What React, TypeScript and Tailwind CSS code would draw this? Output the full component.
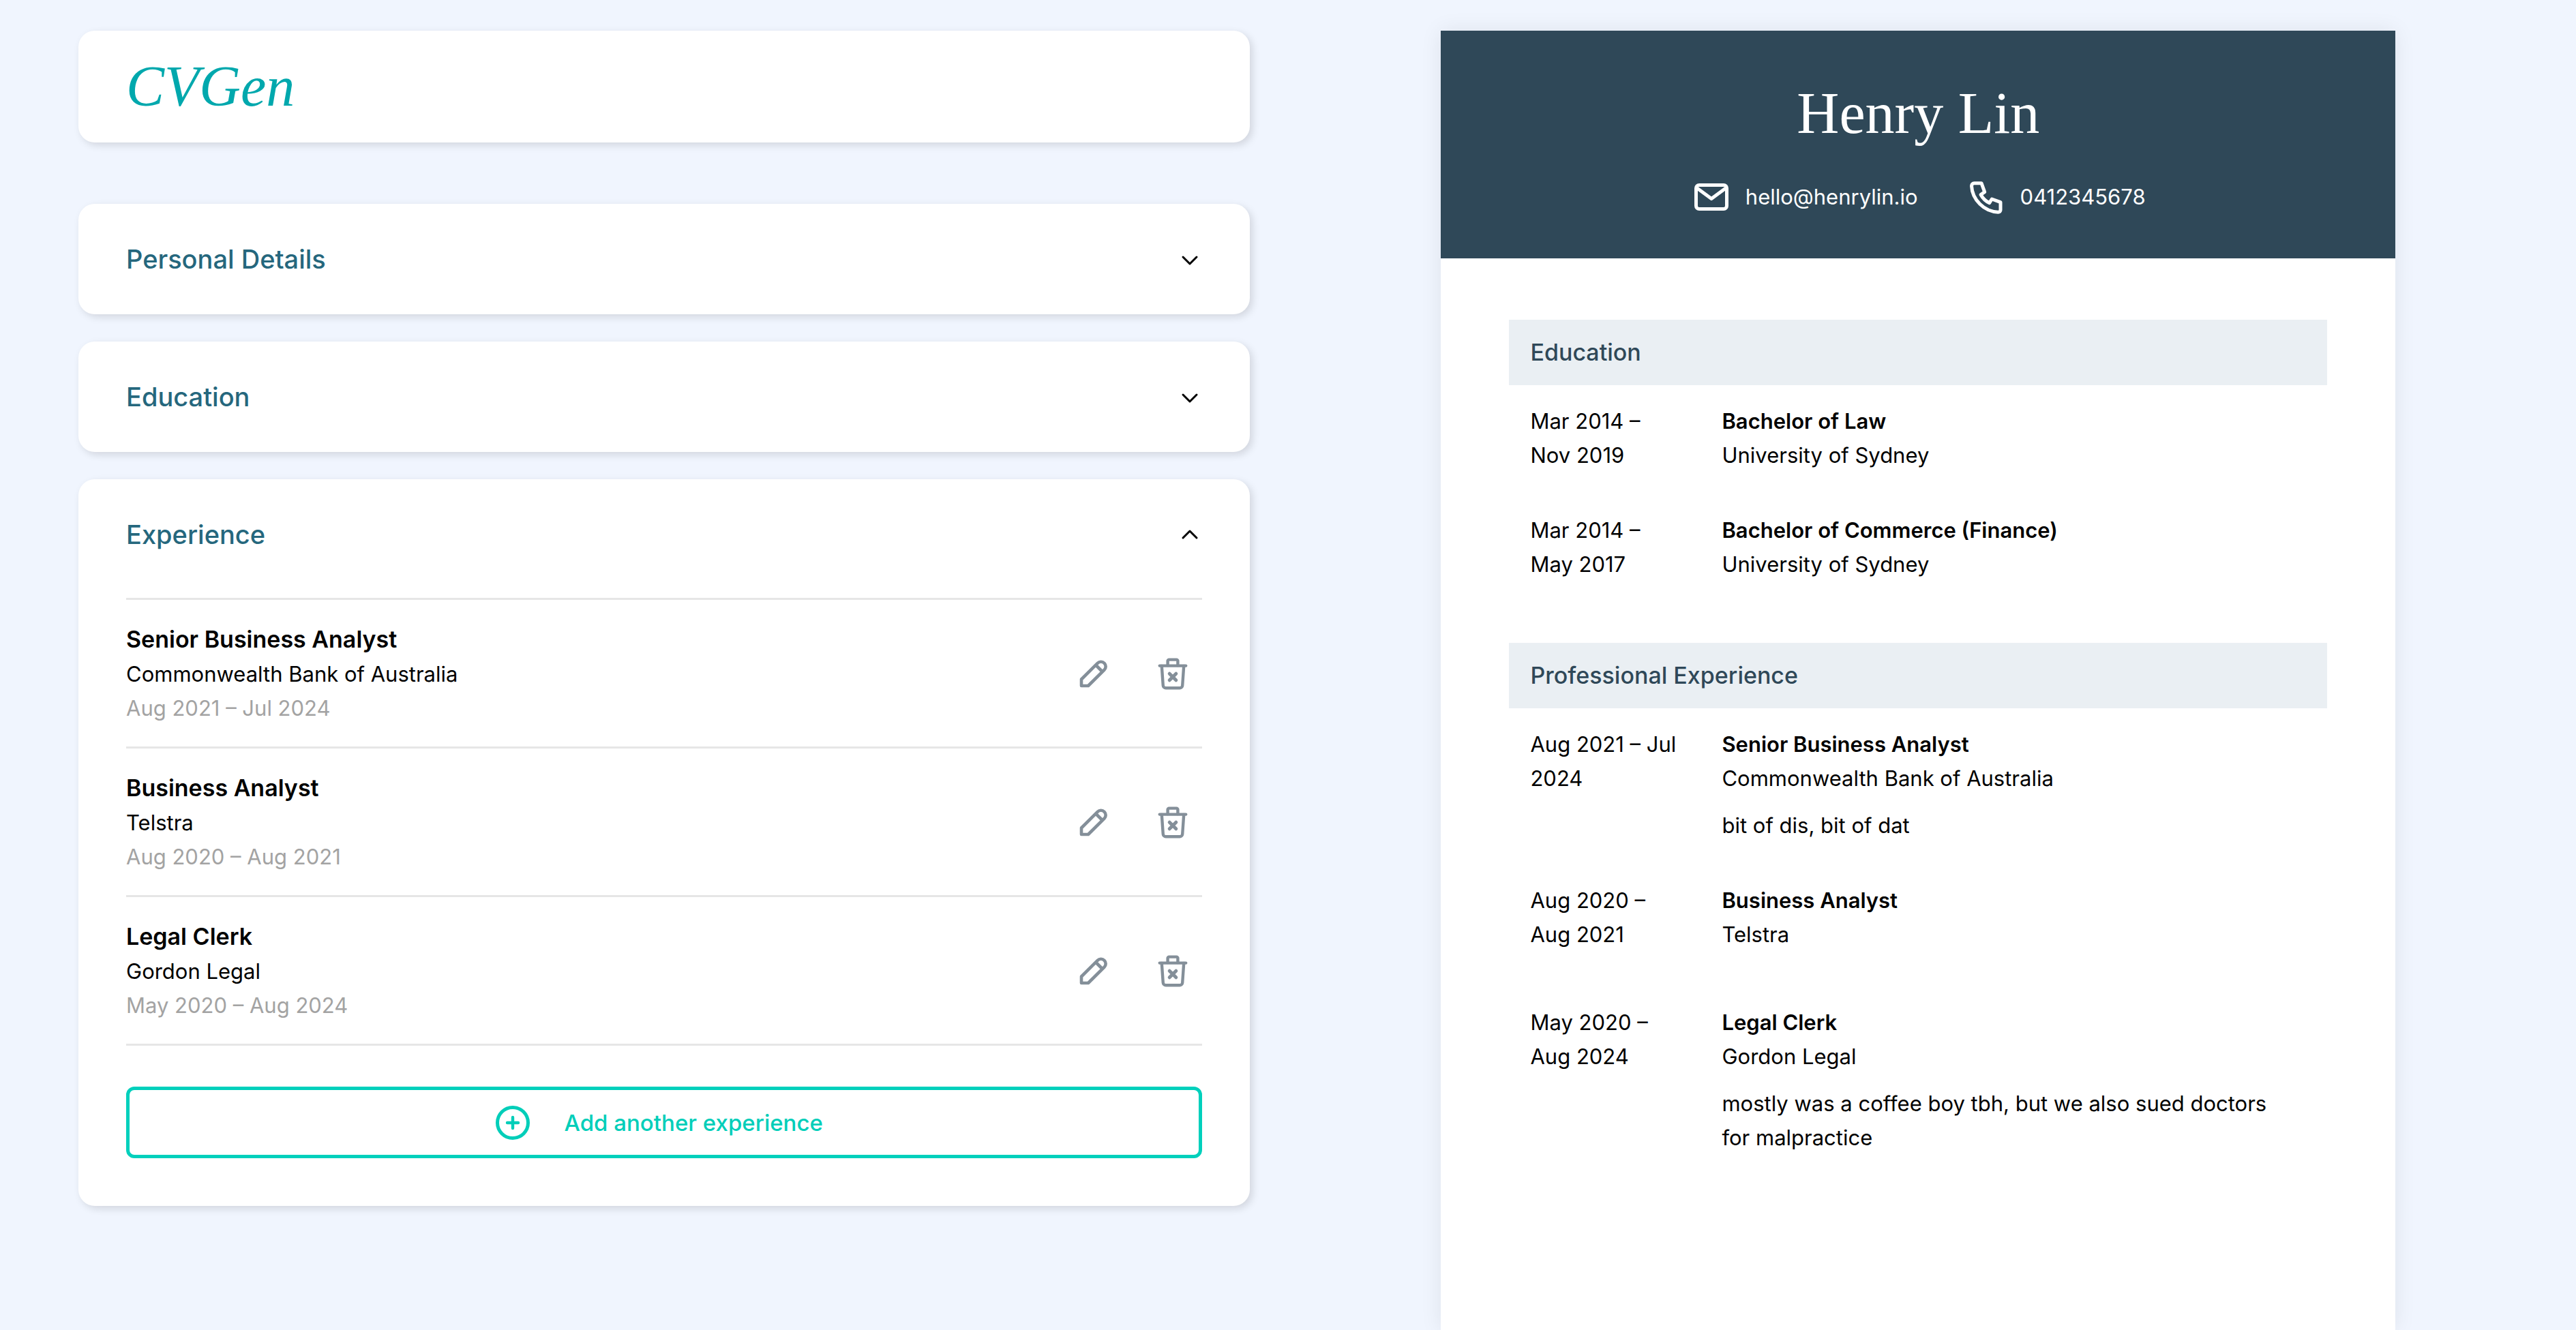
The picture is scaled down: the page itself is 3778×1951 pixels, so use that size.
import { useState, type ReactNode } from "react";

type Job = { title: string; company: string; dates: string; description: string };

const jobs: Job[] = [
  {
    title: "Senior Business Analyst",
    company: "Commonwealth Bank of Australia",
    dates: "Aug 2021 – Jul 2024",
    description: "bit of dis, bit of dat",
  },
  { title: "Business Analyst", company: "Telstra", dates: "Aug 2020 – Aug 2021", description: "" },
  {
    title: "Legal Clerk",
    company: "Gordon Legal",
    dates: "May 2020 – Aug 2024",
    description: "mostly was a coffee boy tbh, but we also sued doctors for malpractice",
  },
];

const degrees = [
  { title: "Bachelor of Law", school: "University of Sydney", dates: "Mar 2014 – Nov 2019" },
  { title: "Bachelor of Commerce (Finance)", school: "University of Sydney", dates: "Mar 2014 – May 2017" },
];

function Chevron({ open }: { open: boolean }) {
  return (
    <svg className="size-9" viewBox="0 0 36 36" fill="none" stroke="currentColor" strokeWidth="3" strokeLinecap="round" strokeLinejoin="round" aria-hidden="true">
      <path d={open ? "M8 23L18 13L28 23" : "M8 15L18 25L28 15"} />
    </svg>
  );
}

function PencilIcon() {
  return (
    <svg className="size-[50px]" viewBox="0 0 50 50" fill="none" stroke="currentColor" strokeWidth="4.6" strokeLinejoin="round" aria-hidden="true">
      <path d="M7 43V33.5L30.7 9.8a7 7 0 0 1 9.9 9.9L17 43Z" />
      <path d="M28 12.5l9.5 9.5" />
    </svg>
  );
}

function TrashIcon() {
  return (
    <svg className="size-[50px]" viewBox="0 0 50 50" fill="none" stroke="currentColor" strokeWidth="4.4" strokeLinecap="round" strokeLinejoin="round" aria-hidden="true">
      <path d="M5.8 13.6H44.2" />
      <path d="M17.6 13V6.6a2 2 0 0 1 2-2h10.8a2 2 0 0 1 2 2V13" />
      <path d="M8.8 14l2 28.6a4 4 0 0 0 4 3.7h20.4a4 4 0 0 0 4-3.7l2-28.6" />
      <path d="M20.2 25.2l9.6 9.6M29.8 25.2l-9.6 9.6" strokeWidth="5" />
    </svg>
  );
}

function PlusCircleIcon() {
  return (
    <svg className="size-[60px]" viewBox="0 0 60 60" fill="none" stroke="currentColor" strokeWidth="5" strokeLinecap="round" aria-hidden="true">
      <circle cx="30" cy="30" r="22.5" />
      <path d="M30 22v16M22 30h16" strokeWidth="4.4" />
    </svg>
  );
}

function MailIcon() {
  return (
    <svg className="size-[60px]" viewBox="0 0 60 60" fill="none" stroke="currentColor" strokeWidth="5" strokeLinecap="round" strokeLinejoin="round" aria-hidden="true">
      <rect x="7.5" y="12.5" width="45" height="35" rx="4.5" />
      <path d="M9 17L30 32.5L51 17" />
    </svg>
  );
}

function PhoneIcon() {
  return (
    <svg className="size-[60px]" viewBox="0 0 60 60" fill="none" stroke="currentColor" strokeWidth="5" strokeLinecap="round" strokeLinejoin="round" aria-hidden="true">
      <path d="M12.5 9.7H23L27.7 22.7L22 26.5C25 32 29 36 34.7 38.7L38.3 33L51 37.7V49C51 51 49.5 52.2 47.5 52.2C27 51.5 9.5 34 8.5 13.7C8.5 11.5 10 9.7 12.5 9.7Z" />
    </svg>
  );
}

function Card({ title, defaultOpen = false, children }: { title: string; defaultOpen?: boolean; children?: ReactNode }) {
  const [open, setOpen] = useState(defaultOpen);
  return (
    <section className="rounded-3xl bg-white px-[70px] shadow-[4px_4px_12px_rgba(0,0,0,0.13)]">
      <h2>
        <button
          type="button"
          aria-expanded={open}
          onClick={() => setOpen(!open)}
          className="flex min-h-[162px] w-full items-center justify-between text-left"
        >
          <span className="text-[38px] leading-[50px] font-medium text-[#25677d]">{title}</span>
          <Chevron open={open} />
        </button>
      </h2>
      {open && children}
    </section>
  );
}

function ResumeSection({ title, children }: { title: string; children: ReactNode }) {
  return (
    <section className="pt-[90px]">
      <h2 className="flex min-h-24 items-center bg-[#eaeff3] px-[31px] text-[34px] leading-[50px] font-medium text-[#2f4858]">
        {title}
      </h2>
      <ul className="flex flex-col gap-[60px] pt-7 pr-[50px] pl-[31px]">{children}</ul>
    </section>
  );
}

function ResumeEntry({ dates, title, place, children }: { dates: string; title: string; place: string; children?: ReactNode }) {
  return (
    <li className="flex gap-[60px]">
      <p className="w-[221px] shrink-0">{dates}</p>
      <div className="min-w-0 flex-1">
        <h3 className="font-semibold">{title}</h3>
        <p>{place}</p>
        {children}
      </div>
    </li>
  );
}

export default function App() {
  return (
    <main className="grid min-h-screen grid-cols-[1719fr_1400fr] gap-[280px] bg-[#f0f5fe] pt-[45px] pr-[265px] pl-[115px] font-['Inter',sans-serif] text-[31px] leading-[50px] text-black">
      <div className="flex flex-col gap-10">
        <header className="mb-[50px] flex min-h-[164px] items-center rounded-3xl bg-white px-[70px] shadow-[4px_4px_12px_rgba(0,0,0,0.13)]">
          <h1 className="font-['Liberation_Serif',serif] text-[84px] leading-[100px] text-[#00a8ad] italic">CVGen</h1>
        </header>

        <Card title="Personal Details" />
        <Card title="Education" />
        <Card title="Experience" defaultOpen>
          <ul className="mt-3 border-t-3 border-[#e6e6e6]">
            {jobs.map((job) => (
              <li key={job.title} className="box-content flex min-h-[215px] items-center justify-between border-b-3 border-[#e6e6e6]">
                <div>
                  <h3 className="text-[34px] leading-[52px] font-semibold">{job.title}</h3>
                  <p>{job.company}</p>
                  <p className="text-[#a3a3a3]">{job.dates}</p>
                </div>
                <div className="flex gap-[66px] pr-[18px] text-[#848f99]">
                  <button type="button" aria-label={`Edit ${job.title}`}>
                    <PencilIcon />
                  </button>
                  <button type="button" aria-label={`Delete ${job.title}`}>
                    <TrashIcon />
                  </button>
                </div>
              </li>
            ))}
          </ul>
          <button
            type="button"
            className="mt-[60px] mb-[70px] flex min-h-[105px] w-full items-center justify-center gap-[46px] rounded-xl border-5 border-[#00d0bc] pr-5 text-[33px] font-medium text-[#00ceb9]"
          >
            <PlusCircleIcon />
            Add another experience
          </button>
        </Card>
      </div>

      <article className="bg-white shadow-[0_0_30px_rgba(0,0,0,0.08)]">
        <header className="bg-[#2f4858] px-[100px] pt-[71px] pb-[60px] text-center text-white">
          <h1 className="font-['Liberation_Serif',serif] text-[86px] leading-[100px]">Henry Lin</h1>
          <div className="mt-[43px] flex justify-center gap-[70px]">
            <p className="flex items-center gap-5">
              <MailIcon />
              hello@henrylin.io
            </p>
            <p className="flex items-center gap-5">
              <PhoneIcon />
              0412345678
            </p>
          </div>
        </header>
        <div className="px-[100px]">
          <ResumeSection title="Education">
            {degrees.map((degree) => (
              <ResumeEntry key={degree.title} dates={degree.dates} title={degree.title} place={degree.school} />
            ))}
          </ResumeSection>
          <ResumeSection title="Professional Experience">
            {jobs.map((job) => (
              <ResumeEntry key={job.title} dates={job.dates} title={job.title} place={job.company}>
                <p className="pt-[19px]">{job.description}</p>
              </ResumeEntry>
            ))}
          </ResumeSection>
        </div>
      </article>
    </main>
  );
}
